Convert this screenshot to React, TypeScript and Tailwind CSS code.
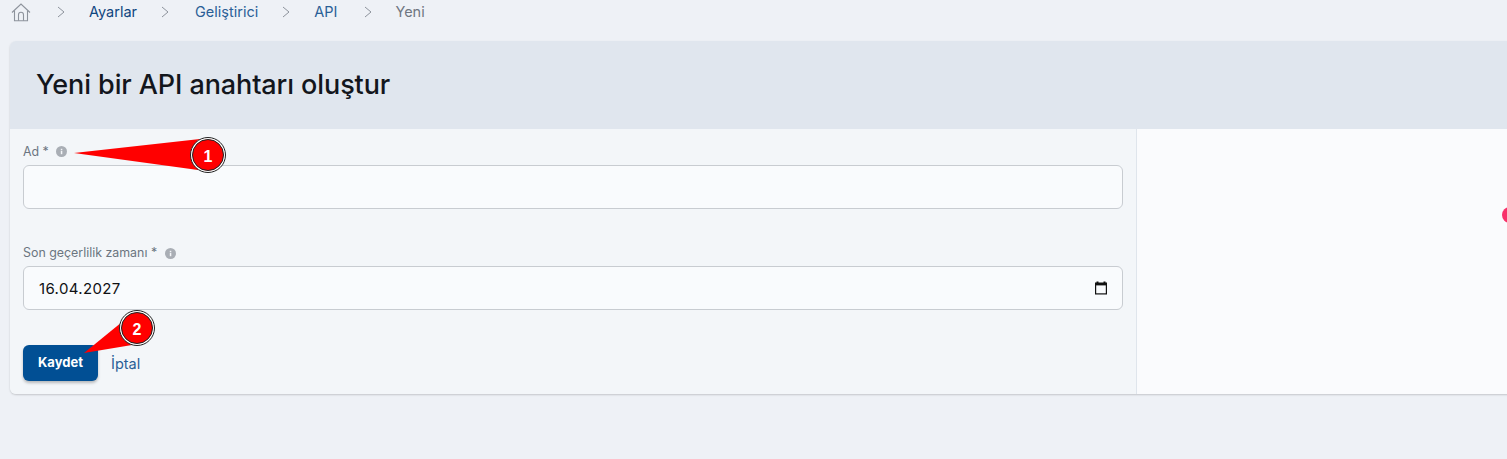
import React from "react";

function Chevron() {
  return (
    <svg width="8" height="12" viewBox="0 0 8 12" fill="none" className="shrink-0">
      <path d="M1 1l6 5-6 5" stroke="#8d939c" strokeWidth="1" />
    </svg>
  );
}

function Info() {
  return (
    <svg width="11" height="11" viewBox="0 0 11 11" className="shrink-0">
      <circle cx="5.5" cy="5.5" r="5.5" fill="#a9aeb5" />
      <rect x="4.8" y="4.8" width="1.5" height="3.4" fill="#f3f6f9" />
      <rect x="4.8" y="2.8" width="1.5" height="1.3" fill="#f3f6f9" />
    </svg>
  );
}

function Callout({ n, points, cx, cy }: { n: string; points: string; cx: number; cy: number }) {
  return (
    <>
      <svg className="absolute left-0 top-0 pointer-events-none" width="1507" height="459" viewBox="0 0 1507 459">
        <polygon points={points} fill="#ff0000" />
        <circle cx={cx} cy={cy} r="17.5" fill="#ffffff" stroke="#222222" strokeWidth="1" />
        <circle cx={cx} cy={cy} r="15.5" fill="#ff0000" stroke="#222222" strokeWidth="1" />
      </svg>
      <span
        className="absolute w-8 text-center text-[16px] leading-5 font-bold text-white font-['Liberation_Sans',sans-serif]"
        style={{ left: cx - 16, top: cy - 8 }}
      >
        {n}
      </span>
    </>
  );
}

export default function App() {
  return (
    <div className="relative h-[459px] w-[1507px] overflow-hidden bg-[#eef1f6] font-['Inter',sans-serif]">
      <nav className="flex h-[24px] items-center pl-[11px] text-[14.5px]">
        <svg width="20" height="20" viewBox="0 0 20 20" fill="none" stroke="#8d939c" strokeWidth="1.1" className="shrink-0">
          <path d="M1 10.5L10 2l9 8.5" />
          <path d="M3.5 8.5v10.2h13V8.5" />
          <path d="M7.5 18.7v-6a2.5 2.5 0 0 1 5 0v6" />
        </svg>
        <span className="ml-[26px]"><Chevron /></span>
        <a className="ml-[24px] text-[#10467f]">Ayarlar</a>
        <span className="ml-[24px]"><Chevron /></span>
        <a className="ml-[26px] text-[#2a5f96]">Geliştirici</a>
        <span className="ml-[24px]"><Chevron /></span>
        <a className="ml-[24px] text-[#2a5f96]">API</a>
        <span className="ml-[27px]"><Chevron /></span>
        <span className="ml-[23px] text-[#6f7681]">Yeni</span>
      </nav>

      <div className="ml-[10px] mt-[17px] w-[1520px] overflow-hidden rounded-t-md rounded-bl-md shadow-[0_1px_2px_rgba(0,0,0,0.18)]">
        <header className="flex h-[88px] items-center bg-[#e0e6ee] pl-[26px]">
          <h1 className="text-[27px] leading-8 font-medium tracking-[-0.1px] text-[#13161c] font-['Inter',sans-serif]">
            Yeni bir API anahtarı oluştur
          </h1>
        </header>
        <div className="flex h-[265px]">
          <form className="w-[1127px] shrink-0 border-r border-[#dfe5ec] bg-[#f3f6f9] pl-[13px] pr-[13px] pt-[13px]">
            <label className="flex h-[18px] items-center gap-[7px] text-[12.4px] text-[#6b7580]">
              <span className="translate-y-px">Ad *</span>
              <Info />
            </label>
            <input
              type="text"
              className="mt-[5px] block h-[44px] w-[1100px] rounded-md border border-[#c8ccd1] bg-[#f9fbfd] px-[15px] outline-none"
            />
            <label className="mt-[35px] flex h-[18px] items-center gap-[8px] text-[12.4px] text-[#6b7580]">
              <span>Son geçerlilik zamanı *</span>
              <Info />
            </label>
            <div className="mt-[4px] flex h-[44px] w-[1100px] items-center justify-between rounded-md border border-[#c8ccd1] bg-[#f9fbfd] pl-[15px] pr-[14px]">
              <span className="translate-y-px text-[15px] tracking-[0.35px] text-[#101114]">16.04.2027</span>
              <svg width="14" height="14" viewBox="0 0 14 14" className="shrink-0">
                <path d="M2.5 0.5h2v1h5v-1h2v1h1.5v12H1v-12h1.5z" fill="#111111" />
                <rect x="2.2" y="4.4" width="9.6" height="7.9" fill="#f9fbfd" />
              </svg>
            </div>
            <div className="mt-[35px] flex items-center gap-[13px]">
              <button
                type="button"
                className="h-[36px] w-[75px] rounded-md bg-[#014f94] text-[13px] font-bold text-white shadow-[0_2px_3px_rgba(0,0,0,0.25)]"
              >
                Kaydet
              </button>
              <a className="translate-y-px text-[14.5px] text-[#2a5f96]">İptal</a>
            </div>
          </form>
          <aside className="flex-1 bg-[#fafbfd]" />
        </div>
      </div>

      <div className="absolute left-[1502px] top-[207px] size-4 rounded-full bg-[#f8316a]" />

      <Callout n="1" points="74,153 200,139 198,170" cx={208} cy={155} />
      <Callout n="2" points="84,353 122,322 132,345" cx={137} cy={328} />
    </div>
  );
}
